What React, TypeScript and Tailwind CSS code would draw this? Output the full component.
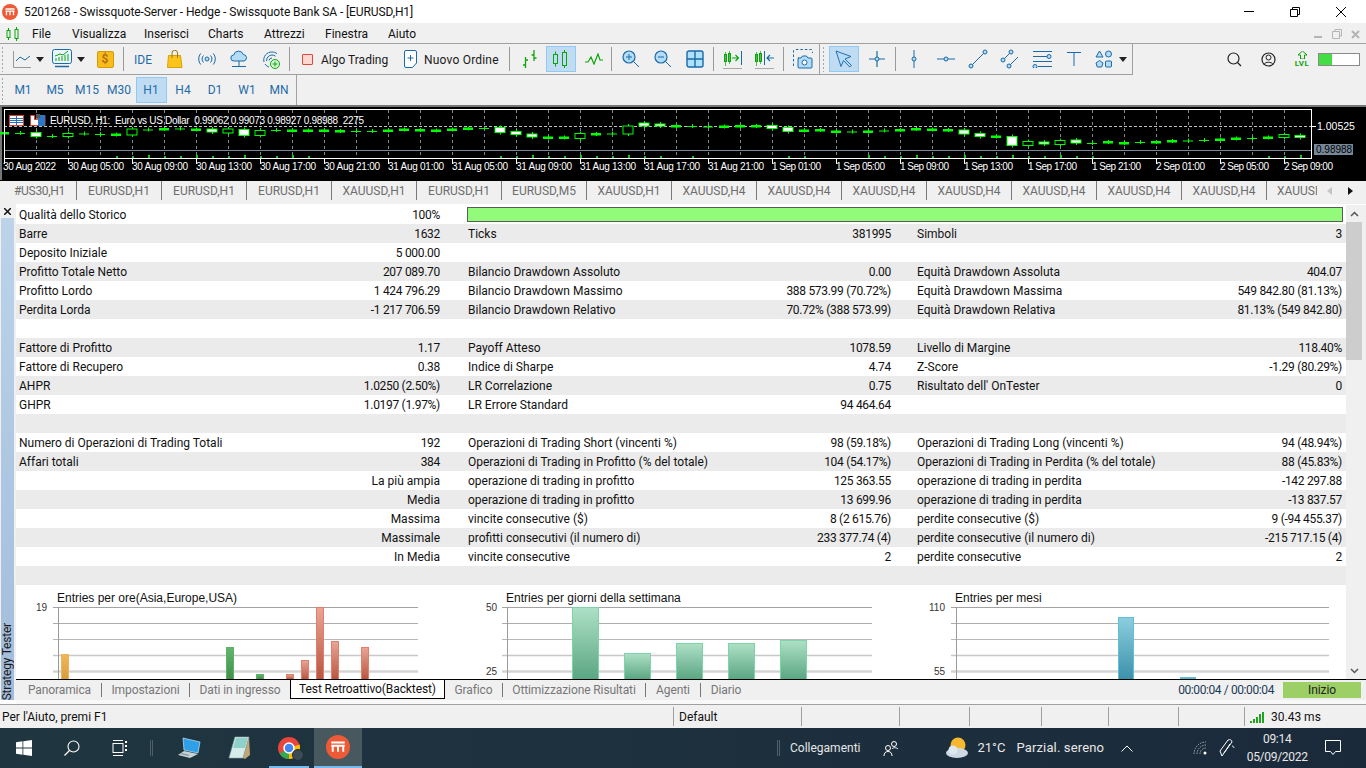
/**
 * MetaTrader 5 — Strategy Tester report view, Windows 10 shell around it.
 */
import { type FC, type ReactNode } from "react";

const BLUE = "#1a6aa8";
const LIGHT = "#b5dcf7";
const GREEN = "#0ba50b";

const Svg: FC<{ w: number; h: number; children: ReactNode }> = ({ w, h, children }) => (
  <svg width={w} height={h} viewBox={`0 0 ${w} ${h}`} fill="none" className="block shrink-0">
    {children}
  </svg>
);

/* ---------- toolbar drawings ---------- */

const MtLogo: FC<{ size: number }> = ({ size }) => (
  <svg width={size} height={size} viewBox="0 0 16 16" className="block shrink-0">
    <circle cx="8" cy="8" r="8" fill="#ee5a36" />
    <path d="M3.500 5h9M3.500 7.200h9M4.500 7.200v4M8 7.200v4M11.500 7.200v4" stroke="#fff" strokeWidth="1.300" />
  </svg>
);

const Arrow = () => (
  <svg width="8" height="5" viewBox="0 0 8 5" className="block shrink-0">
    <path d="M0 0h8L4 5z" fill="#222" />
  </svg>
);

const Sep = () => <div className="w-px h-[24px] bg-[#9a9a9a] shrink-0" />;

const Cell: FC<{ className?: string; children?: ReactNode }> = ({ className = "w-8", children }) => (
  <div className={`${className} h-[26px] flex items-center justify-center shrink-0`}>{children}</div>
);

const Gripper = () => (
  <div className="w-[3px] h-[26px] shrink-0 [background-image:radial-gradient(#a8a8a8_1px,transparent_1px)] [background-size:3px_4px]" />
);

const Handle: FC<{ x: number; y: number }> = ({ x, y }) => (
  <circle cx={x} cy={y} r="2" fill={LIGHT} stroke={BLUE} />
);

const LineChartIcon = () => (
  <Svg w={18} h={18}>
    <path d="M.5 1v16.500H18" stroke="#999" />
    <path d="M3 11l4-4 5 3 5-4" stroke={BLUE} />
  </Svg>
);
const ChartWindowIcon = () => (
  <Svg w={20} h={20}>
    <rect x=".5" y=".5" width="19" height="14" rx="2" fill="#eaf5fd" stroke={BLUE} />
    <path d="M4 12V9M7 12V8M10 12V7M13 12V6M16 12V5" stroke={GREEN} />
    <path d="M3 7l5-2 3 1 5-4" stroke={GREEN} />
    <path d="M3 17.500h14" stroke={BLUE} strokeWidth="1.500" />
  </Svg>
);
const DollarIcon = () => (
  <div className="w-[17px] h-[17px] rounded-[2px] bg-[#f8bd1c] border border-[#d99a00] flex items-center justify-center text-[12px] font-bold leading-none text-[#b3700a]">
    $
  </div>
);
const BagIcon = () => (
  <Svg w={16} h={18}>
    <path d="M1.500 5.500h12l1.500 12H.5z" fill="#fcc419" stroke="#d8a106" />
    <path d="M5 8V3a2.500 2.500 0 015.500 0v5" stroke="#9a7b12" />
  </Svg>
);
const SignalsIcon = () => (
  <Svg w={18} h={14}>
    <circle cx="9" cy="7" r="2" stroke={BLUE} fill={LIGHT} />
    <path d="M5.500 3.500a5 5 0 000 7M12.500 3.500a5 5 0 010 7M2.700 1.500a8.500 8.500 0 000 11M15.300 1.500a8.500 8.500 0 010 11" stroke={BLUE} />
  </Svg>
);
const CloudIcon = () => (
  <Svg w={18} h={18}>
    <path d="M4 11a3 3 0 01-.3-6 5 5 0 019.600-.5A3.300 3.300 0 0114 11z" fill={LIGHT} stroke={BLUE} />
    <path d="M9 11v4M2 16.500h14M9 15v2" stroke={BLUE} />
  </Svg>
);
const WebIcon = () => (
  <Svg w={18} h={19}>
    <path d="M2 12A8 8 0 0110 2c2 0 3.500.6 5 1.700M4.600 11A5.500 5.500 0 0110 5c1.400 0 2.500.4 3.500 1.200M7 10.500A3 3 0 0110 8" stroke={BLUE} />
    <path d="M3 14c1 1.500 2.500 2.500 4 3" stroke={BLUE} />
    <circle cx="13" cy="14" r="4.500" fill="#d7f8d7" stroke={GREEN} />
    <path d="M13 11.500v5M10.500 14h5" stroke={GREEN} />
  </Svg>
);
const NewOrderIcon = () => (
  <Svg w={13} h={18}>
    <path d="M.5 2a1.500 1.500 0 011.500-1.500h9A1.500 1.500 0 0112.500 2v11l-4 4.500H2A1.500 1.500 0 01.5 16z" fill="#fff" stroke={BLUE} />
    <path d="M6.500 5v6M3.500 8h6" stroke={BLUE} />
  </Svg>
);
const BarsIcon = () => (
  <Svg w={18} h={20}>
    <path d="M4.500 8v11M2 16h2.500M4.500 11H7M13 1v11M10.500 6H13M13 9h2.500" stroke={GREEN} strokeWidth="1.300" />
  </Svg>
);
const CandlesIcon = () => (
  <Svg w={18} h={18}>
    <rect x="1.500" y="4.500" width="4" height="9" stroke={GREEN} />
    <rect x="10.500" y="2.500" width="4" height="13" stroke={GREEN} />
    <path d="M3.500 1.500v3M3.500 13.500v3M12.500 0v2.500M12.500 15.500V18" stroke={GREEN} />
  </Svg>
);
const ZigzagIcon = () => (
  <Svg w={18} h={12}>
    <path d="M0 9h3l3-5 3 7 4-10 2 6h3" stroke={GREEN} strokeWidth="1.200" />
  </Svg>
);
const ZoomIcon: FC<{ plus?: boolean }> = ({ plus }) => (
  <Svg w={18} h={18}>
    <circle cx="7" cy="7" r="6" fill={LIGHT} stroke={BLUE} strokeWidth="1.200" />
    <path d={plus ? "M7 4v6M4 7h6" : "M4 7h6"} stroke={BLUE} />
    <path d="M11.500 11.500L17 17" stroke={BLUE} />
  </Svg>
);
const GridIcon = () => (
  <Svg w={18} h={18}>
    <rect x="1" y="1" width="16" height="16" rx="2" fill="#aee0ff" stroke={BLUE} strokeWidth="1.400" />
    <path d="M9 1v16M1 9h16" stroke={BLUE} strokeWidth="1.400" />
  </Svg>
);
const ShiftIcon = () => (
  <Svg w={20} h={20}>
    <rect x="1.500" y="5.500" width="2" height="7" stroke={GREEN} />
    <rect x="5.500" y="4.500" width="2" height="8" stroke={GREEN} />
    <path d="M2.500 3v14M6.500 2v13" stroke={GREEN} strokeWidth=".7" />
    <path d="M9 9h6M12.500 6l3 3-3 3" stroke={GREEN} strokeWidth="1.200" />
    <path d="M18.500 2v14" stroke={BLUE} />
    <path d="M0 19.500h19" stroke="#aaa" />
  </Svg>
);
const ScrollIcon = () => (
  <Svg w={20} h={20}>
    <rect x=".5" y="5.500" width="2" height="7" stroke={GREEN} />
    <rect x="4.500" y="4.500" width="2" height="8" stroke={GREEN} />
    <path d="M1.500 3v14M5.500 2v13" stroke={GREEN} strokeWidth=".7" />
    <path d="M9.500 2v14" stroke={BLUE} />
    <path d="M12 9h7M15 6l-3 3 3 3" stroke={BLUE} strokeWidth="1.200" />
    <path d="M0 19.500h19" stroke="#aaa" />
  </Svg>
);
const ScreenshotIcon = () => (
  <Svg w={20} h={20}>
    <path d="M.5 17V2A1.500 1.500 0 012 .5h16A1.500 1.500 0 0119.500 2v2" stroke={BLUE} strokeDasharray="2.500 2" />
    <path d="M5 9h3l1.500-2h4l1.500 2h3a1 1 0 011 1v8a1 1 0 01-1 1H6a1 1 0 01-1-1v-8a1 1 0 011-1z" fill={LIGHT} stroke={BLUE} />
    <circle cx="11.500" cy="13.500" r="2.500" fill="#fff" stroke={BLUE} />
  </Svg>
);
const CursorIcon = () => (
  <Svg w={18} h={18}>
    <path d="M1 1l15 5.500-6 2.500 6.500 6.500-1.800 1.500L8.500 10.500 6 16.500z" fill={LIGHT} stroke="#2a6da8" strokeLinejoin="round" />
  </Svg>
);
const CrossIcon = () => (
  <Svg w={18} h={18}>
    <path d="M9 1v16M1 9h16" stroke={BLUE} strokeWidth="1.200" />
    <Handle x={9} y={9} />
  </Svg>
);
const VLineIcon = () => (
  <Svg w={6} h={18}>
    <path d="M3 0v18" stroke={BLUE} />
    <Handle x={3} y={9} />
  </Svg>
);
const HLineIcon = () => (
  <Svg w={18} h={6}>
    <path d="M0 3h18" stroke={BLUE} />
    <Handle x={9} y={3} />
  </Svg>
);
const TrendIcon = () => (
  <Svg w={20} h={20}>
    <path d="M3 17L17 3" stroke={BLUE} />
    <Handle x={3} y={17} />
    <Handle x={17} y={3} />
  </Svg>
);
const ChannelIcon = () => (
  <Svg w={20} h={20}>
    <path d="M3 11l8-8M9 17l9-9" stroke={BLUE} />
    <Handle x={3} y={11} />
    <Handle x={11} y={3} />
    <Handle x={9} y={17} />
  </Svg>
);
const FiboIcon = () => (
  <Svg w={20} h={18}>
    <path d="M1 1.500h19M1 6.500h15M1 11.500h19M6 16.500h14" stroke={BLUE} />
    <Handle x={17} y={6.5} />
    <Handle x={3} y={16.5} />
  </Svg>
);
const TextToolIcon = () => (
  <Svg w={14} h={14}>
    <path d="M0 .5h14M7 .5V14" stroke={BLUE} />
  </Svg>
);
const ShapesIcon = () => (
  <Svg w={18} h={18}>
    <path d="M4.500 1l3.500 6H1z" fill={LIGHT} stroke={BLUE} />
    <circle cx="13.500" cy="4" r="3" fill={LIGHT} stroke={BLUE} />
    <path d="M4.500 10.500l3.500 2.500-1.300 4H2.300L1 13z" fill={LIGHT} stroke={BLUE} />
    <rect x="10.500" y="11" width="6" height="6" rx="1" fill={LIGHT} stroke={BLUE} />
  </Svg>
);

/* ---------- title and menu ---------- */

const TitleBar = () => (
  <div className="h-[23px] bg-white flex items-center shrink-0">
    <div className="ml-[2px]">
      <MtLogo size={16} />
    </div>
    <span className="ml-[6px] text-[12px] tracking-[-0.1px] text-[#111]">
      5201268 - Swissquote-Server - Hedge - Swissquote Bank SA - [EURUSD,H1]
    </span>
    <div className="ml-auto flex items-center">
      <div className="w-[46px] flex justify-center">
        <div className="w-[10px] h-px bg-black" />
      </div>
      <div className="w-[46px] flex justify-center">
        <Svg w={10} h={10}>
          <path d="M2.500 2.500V.5h7v7h-2M.5 2.500h7v7h-7z" stroke="#000" />
        </Svg>
      </div>
      <div className="w-[46px] flex justify-center mr-[2px]">
        <Svg w={10} h={10}>
          <path d="M0 0l10 10M10 0L0 10" stroke="#000" />
        </Svg>
      </div>
    </div>
  </div>
);

const MENU: [string, string][] = [
  ["File", "ml-[12px] w-[40px]"],
  ["Visualizza", "w-[72px]"],
  ["Inserisci", "w-[64px]"],
  ["Charts", "w-[56px]"],
  ["Attrezzi", "w-[61px]"],
  ["Finestra", "w-[63px]"],
  ["Aiuto", "w-[40px]"],
];

const MenuBar = () => (
  <div className="h-[20px] bg-[#f0f0f0] flex items-center shrink-0 text-[12px] text-[#111] pt-[2px]">
    <div className="ml-[6px] w-[14px]">
      <Svg w={13} h={14}>
        <rect x="1" y="3.500" width="3" height="7" stroke={GREEN} />
        <rect x="9" y="2.500" width="3" height="9" stroke={GREEN} />
        <path d="M2.500 1v2.500M2.500 10.500V13M10.500 0v2.500M10.500 11.500V14" stroke={GREEN} />
      </Svg>
    </div>
    {MENU.map(([label, cls]) => (
      <span key={label} className={`${cls} shrink-0`}>
        {label}
      </span>
    ))}
    <div className="ml-auto mr-[5px] flex items-center gap-[9px]">
      <Svg w={10} h={10}>
        <path d="M1 8h8" stroke="#b5b5b5" strokeWidth="2" />
      </Svg>
      <Svg w={10} h={10}>
        <path d="M3 2V.5h6.500V7H8M.5 2.500H7.500v7H.5z" stroke="#b5b5b5" />
      </Svg>
      <Svg w={10} h={10}>
        <path d="M1 2l7 7M8 2L1 9" stroke="#b5b5b5" strokeWidth="2" />
      </Svg>
    </div>
  </div>
);

const ToolbarMain = () => (
  <div className="h-[32px] bg-[#f0f0f0] border-t border-[#a0a0a0] flex shrink-0">
    <div className="w-[1133px] h-[31px] border-b border-r border-[#a0a0a0] flex items-center text-[12px] text-[#1a1a1a] shrink-0">
      <div className="ml-[1px] w-[7px]">
        <Gripper />
      </div>
      <Cell className="w-[28px]">
        <LineChartIcon />
      </Cell>
      <Cell className="w-[8px]">
        <Arrow />
      </Cell>
      <Cell className="ml-[4px] w-[28px]">
        <ChartWindowIcon />
      </Cell>
      <Cell className="ml-[1px] w-[8px]">
        <Arrow />
      </Cell>
      <Cell className="ml-[4px] w-[32px]">
        <DollarIcon />
      </Cell>
      <div className="ml-[2px] mr-[3px]">
        <Sep />
      </div>
      <Cell>
        <span className="text-[12px] text-[#1f6ba8] pt-[1px]">IDE</span>
      </Cell>
      <Cell>
        <BagIcon />
      </Cell>
      <Cell>
        <SignalsIcon />
      </Cell>
      <Cell>
        <CloudIcon />
      </Cell>
      <Cell>
        <WebIcon />
      </Cell>
      <div className="ml-[2px]">
        <Sep />
      </div>
      <div className="ml-[12px] w-[11px] h-[11px] rounded-[1px] bg-[#fbd9d2] border border-[#e2483a] shrink-0" />
      <span className="ml-[8px] w-[83px] shrink-0 whitespace-nowrap pt-[1px]">Algo Trading</span>
      <NewOrderIcon />
      <span className="ml-[7px] w-[85px] shrink-0 whitespace-nowrap pt-[1px] tracking-[0.2px]">Nuovo Ordine</span>
      <Sep />
      <Cell className="ml-[5px] w-[30px]">
        <BarsIcon />
      </Cell>
      <Cell className="ml-[1px] w-[30px] bg-[#c0dcf3] border border-[#90c8f6]">
        <CandlesIcon />
      </Cell>
      <Cell className="w-[35px]">
        <ZigzagIcon />
      </Cell>
      <Sep />
      <Cell className="ml-[3px] w-8">
        <ZoomIcon plus />
      </Cell>
      <Cell>
        <ZoomIcon />
      </Cell>
      <Cell>
        <GridIcon />
      </Cell>
      <div className="ml-[2px]">
        <Sep />
      </div>
      <Cell className="ml-[3px] w-8">
        <ShiftIcon />
      </Cell>
      <Cell>
        <ScrollIcon />
      </Cell>
      <div className="ml-[2px]">
        <Sep />
      </div>
      <Cell className="ml-[3px] w-8">
        <ScreenshotIcon />
      </Cell>
      <div className="w-px h-[31px] bg-[#a0a0a0] shrink-0" />
      <div className="ml-[2px]">
        <Gripper />
      </div>
      <Cell className="ml-[4px] w-[30px] bg-[#c0dcf3] border border-[#90c8f6]">
        <CursorIcon />
      </Cell>
      <Cell className="ml-[2px] w-8">
        <CrossIcon />
      </Cell>
      <div className="ml-[2px]">
        <Sep />
      </div>
      <Cell className="ml-[2px] w-8">
        <VLineIcon />
      </Cell>
      <Cell>
        <HLineIcon />
      </Cell>
      <Cell>
        <TrendIcon />
      </Cell>
      <Cell>
        <ChannelIcon />
      </Cell>
      <Cell>
        <FiboIcon />
      </Cell>
      <Cell>
        <TextToolIcon />
      </Cell>
      <Cell className="w-[28px]">
        <ShapesIcon />
      </Cell>
      <Cell className="w-[10px]">
        <Arrow />
      </Cell>
    </div>
    <div className="flex-1 flex items-center h-[31px]">
      <Cell className="ml-[85px] w-[32px]">
        <svg width="15" height="15" viewBox="0 0 15 15" fill="none" className="block">
          <circle cx="6.500" cy="6.500" r="5.500" stroke="#222" strokeWidth="1.200" />
          <path d="M10.500 10.500L14 14" stroke="#222" strokeWidth="1.200" />
        </svg>
      </Cell>
      <Cell className="ml-[2px] w-[32px]">
        <svg width="15" height="15" viewBox="0 0 15 15" fill="none" className="block">
          <circle cx="7.500" cy="7.500" r="6.500" stroke="#222" strokeWidth="1.200" />
          <circle cx="7.500" cy="5.500" r="2.500" stroke="#222" />
          <path d="M3 12.500c1-3 8-3 9 0" stroke="#222" />
        </svg>
      </Cell>
      <div className="ml-[2px] w-[32px] flex flex-col items-center text-[#0ba50b]">
        <svg width="9" height="8" viewBox="0 0 9 8" className="block">
          <path d="M4.500 0L9 4H6.500v4h-4V4H0z" fill="none" stroke="#0ba50b" />
        </svg>
        <span className="text-[8px] leading-[9px] font-bold tracking-[0.5px]">LVL</span>
      </div>
      <div className="w-[42px] h-[13px] border border-[#8a8a8a] bg-white shrink-0">
        <div className="w-[13px] h-full bg-[#44dd44]" />
      </div>
    </div>
  </div>
);

const TIMEFRAMES = ["M1", "M5", "M15", "M30", "H1", "H4", "D1", "W1", "MN"];

const ToolbarTimeframes = () => (
  <div className="h-[30px] bg-[#f0f0f0] flex items-center shrink-0">
    <div className="ml-[1px] w-[6px]">
      <Gripper />
    </div>
    {TIMEFRAMES.map((t) => (
      <div
        key={t}
        className={
          t === "H1"
            ? "w-[31px] mx-[0.5px] h-[26px] flex items-center justify-center text-[12px] text-[#1f6ba8] bg-[#c0dcf3] border border-[#90c8f6]"
            : "w-[32px] h-[26px] flex items-center justify-center text-[12px] text-[#1f6ba8]"
        }
      >
        {t}
      </div>
    ))}
    <div className="ml-[1px] w-px h-[30px] bg-[#a0a0a0]" />
  </div>
);

/* ---------- price chart ---------- */

// kind: t = thin doji, k = thick flat candle, w = white body, h = hollow body
const CANDLES: [number, string, number?][] = [
  [133, "k"], [133, "t"], [134.5, "w", 4], [136, "t"], [135, "h", 3], [133.5, "t"], [134, "t"], [134.5, "k"],
  [132, "h", 6], [129.5, "t"], [129, "k"], [128.5, "t"], [129.5, "k"], [130.5, "w", 3], [131, "h", 4], [132.5, "w", 6],
  [133, "h", 5], [130, "t"], [130.5, "k"], [130.5, "k"], [130.5, "k"], [131, "k"], [131, "t"], [131, "t"],
  [130.5, "k"], [129.5, "k"], [130, "k"], [130.5, "k"], [129.5, "k"], [128.5, "k"], [128, "t"], [130, "w", 5],
  [133, "w", 3], [135.5, "w", 3], [137.5, "k"], [137.5, "k"], [136, "h", 5], [134, "k"], [133.5, "t"], [130, "h", 8],
  [124.5, "w", 3], [125, "w", 2], [126, "k"], [126, "t"], [126.5, "t"], [126.5, "k"], [126, "k"], [126, "k"],
  [127, "w", 3], [129.5, "w", 4], [130.5, "k"], [130, "k"], [131.5, "k"], [131.5, "t"], [131.5, "k"], [130.5, "t"],
  [130, "k"], [129, "k"], [129.5, "k"], [130, "k"], [132, "w", 4], [135, "w", 3], [136.5, "k"], [141, "w", 9],
  [143.5, "h", 4], [143, "w", 2], [142.5, "h", 4], [141.5, "w", 3], [143, "t"], [142, "k"], [143, "k"], [142, "t"],
  [142, "k"], [141, "k"], [140.5, "t"], [140, "t"], [139.5, "k"], [138.5, "k"], [138, "t"], [137.5, "k"],
  [136, "h", 3], [136.5, "w", 2],
];

const TIME_LABELS = [
  "30 Aug 2022", "30 Aug 05:00", "30 Aug 09:00", "30 Aug 13:00", "30 Aug 17:00", "30 Aug 21:00", "31 Aug 01:00",
  "31 Aug 05:00", "31 Aug 09:00", "31 Aug 13:00", "31 Aug 17:00", "31 Aug 21:00", "1 Sep 01:00", "1 Sep 05:00",
  "1 Sep 09:00", "1 Sep 13:00", "1 Sep 17:00", "1 Sep 21:00", "2 Sep 01:00", "2 Sep 05:00", "2 Sep 09:00",
];

const VOLUME_SKIP = new Set([
  0, 1, 2, 3, 4, 5, 6, 20, 21, 22, 23, 24, 25, 26, 27, 28, 29, 30, 42, 44, 45, 46, 47, 48, 51, 52, 53,
  69, 70, 71, 72, 73, 74, 75, 76, 77, 78,
]);

const PriceChart = () => (
  <svg width="1366" height="75" viewBox="0 105 1366 75" className="block shrink-0 font-['Liberation_Sans',sans-serif]">
    <rect x="0" y="105" width="1366" height="75" fill="#000" />
    <path d="M0 105.500h1366" stroke="#777" strokeWidth="3" />
    <path d="M1 105v75" stroke="#777" strokeWidth="2" />
    {Array.from({ length: 40 }, (_, i) => (
      <path key={i} d={`M${36.5 + 32 * i} 110v47`} stroke="#778899" strokeDasharray="3 3" />
    ))}
    <path d="M4 126.500h1307" stroke="#c0c0c0" strokeDasharray="3 2" />
    <path d="M4 150.500h1307" stroke="#778899" />
    {CANDLES.map(([y, kind, h = 0], i) => {
      const x = 4 + 16 * i;
      const body = kind === "t"
        ? <path d={`M${x - 5} ${y + 0.5}h10`} stroke="#00ff00" />
        : kind === "k"
          ? <rect x={x - 5} y={y - 1} width="10" height="2.500" fill="#00ff00" />
          : <rect x={x - 5} y={y - h / 2} width="10" height={h} fill={kind === "w" ? "#fff" : "#000"} stroke="#00ff00" />;
      return (
        <g key={i}>
          <path d={`M${x + 0.5} ${y - h / 2 - 2}v${h + 4}`} stroke="#00ff00" />
          {body}
          {!VOLUME_SKIP.has(i) && <rect x={x} y={i % 3 === 0 ? 155 : 156} width="2" height={i % 3 === 0 ? 3 : 2} fill="#1fc01f" />}
        </g>
      );
    })}
    <rect x="4.500" y="109.500" width="1307" height="49" stroke="#fff" fill="none" />
    {TIME_LABELS.map((t, i) => (
      <g key={t}>
        <path d={`M${4.5 + 64 * i} 158v6`} stroke="#fff" />
        <text x={3 + 64 * i + (i > 0 ? 1 : 0)} y="170" fill="#fff" fontSize="10" textLength={t.length > 11 ? 56 : t.startsWith("30") ? 53 : 49}>
          {t}
        </text>
      </g>
    ))}
    <path d="M1311 126.500h5" stroke="#fff" />
    <text x="1317" y="130" fill="#fff" fontSize="10.500">1.00525</text>
    <rect x="1314" y="144" width="39" height="11" fill="#778899" />
    <text x="1316" y="153" fill="#000" fontSize="10">0.98988</text>
    <g>
      <rect x="9.500" y="115.500" width="14" height="10" fill="#fff" stroke="#d8412f" />
      <path d="M16.500 116v9M10 118.500h13M10 120.500h13M10 122.500h13" stroke="#2a6fbf" />
      <path d="M30.500 115.500h4v4h3v-4h7.500v10h-14.500z" fill="#fff" stroke="#d8412f" />
      <rect x="38" y="115" width="7" height="11" fill="#2a78c8" />
      <rect x="36" y="114" width="4" height="4" fill="#555" />
    </g>
    <text x="50" y="124" fill="#fff" fontSize="10" textLength="314" className="whitespace-pre">
      EURUSD, H1:  Euro vs US Dollar  0.99062 0.99073 0.98927 0.98988  2275
    </text>
  </svg>
);

/* ---------- chart tabs ---------- */

const CHART_TABS = [
  "EURUSD,H1", "EURUSD,H1", "EURUSD,H1", "XAUUSD,H1", "EURUSD,H1", "EURUSD,M5", "XAUUSD,H1",
  "XAUUSD,H4", "XAUUSD,H4", "XAUUSD,H4", "XAUUSD,H4", "XAUUSD,H4", "XAUUSD,H4", "XAUUSD,H4",
];

const ChartTabs = () => (
  <div className="h-[24px] bg-[#f0f0f0] border-t border-black shrink-0 flex items-start">
    <div className="w-[1317px] h-[19px] flex overflow-hidden text-[12px] text-[#6e6e6e]">
      <div className="w-[77px] h-[19px] flex items-center border-r border-[#7a7a7a] shrink-0 pl-[14px]">
        <span className="whitespace-nowrap tracking-[-0.3px]">#US30,H1</span>
      </div>
      {CHART_TABS.map((t, i) => (
        <div key={i} className="w-[85px] h-[19px] flex items-center justify-center border-r border-[#7a7a7a] shrink-0">
          {t}
        </div>
      ))}
      <div className="w-[60px] h-[19px] flex items-center pl-[10px] shrink-0 whitespace-nowrap overflow-hidden">
        <span className="w-[40px] overflow-hidden">XAUUSD,H4</span>
      </div>
    </div>
    <div className="h-[19px] flex items-center ml-[10px] gap-[16px]">
      <svg width="5" height="8" viewBox="0 0 5 8" className="block"><path d="M5 0v8L0 4z" fill="#c4c4c4" /></svg>
      <svg width="5" height="8" viewBox="0 0 5 8" className="block"><path d="M0 0v8l5-4z" fill="#111" /></svg>
    </div>
  </div>
);

/* ---------- report table ---------- */

type Row = [string, string, string, string, string, string];

const ROWS: Row[] = [
  ["Qualità dello Storico", "100%", "", "", "", ""],
  ["Barre", "1632", "Ticks", "381995", "Simboli", "3"],
  ["Deposito Iniziale", "5 000.00", "", "", "", ""],
  ["Profitto Totale Netto", "207 089.70", "Bilancio Drawdown Assoluto", "0.00", "Equità Drawdown Assoluta", "404.07"],
  ["Profitto Lordo", "1 424 796.29", "Bilancio Drawdown Massimo", "388 573.99 (70.72%)", "Equità Drawdown Massima", "549 842.80 (81.13%)"],
  ["Perdita Lorda", "-1 217 706.59", "Bilancio Drawdown Relativo", "70.72% (388 573.99)", "Equità Drawdown Relativa", "81.13% (549 842.80)"],
  ["", "", "", "", "", ""],
  ["Fattore di Profitto", "1.17", "Payoff Atteso", "1078.59", "Livello di Margine", "118.40%"],
  ["Fattore di Recupero", "0.38", "Indice di Sharpe", "4.74", "Z-Score", "-1.29 (80.29%)"],
  ["AHPR", "1.0250 (2.50%)", "LR Correlazione", "0.75", "Risultato dell' OnTester", "0"],
  ["GHPR", "1.0197 (1.97%)", "LR Errore Standard", "94 464.64", "", ""],
  ["", "", "", "", "", ""],
  ["Numero di Operazioni di Trading Totali", "192", "Operazioni di Trading Short (vincenti %)", "98 (59.18%)", "Operazioni di Trading Long (vincenti %)", "94 (48.94%)"],
  ["Affari totali", "384", "Operazioni di Trading in Profitto (% del totale)", "104 (54.17%)", "Operazioni di Trading in Perdita (% del totale)", "88 (45.83%)"],
  ["", "La più ampia", "operazione di trading in profitto", "125 363.55", "operazione di trading in perdita", "-142 297.88"],
  ["", "Media", "operazione di trading in profitto", "13 699.96", "operazione di trading in perdita", "-13 837.57"],
  ["", "Massima", "vincite consecutive ($)", "8 (2 615.76)", "perdite consecutive ($)", "9 (-94 455.37)"],
  ["", "Massimale", "profitti consecutivi (il numero di)", "233 377.74 (4)", "perdite consecutive (il numero di)", "-215 717.15 (4)"],
  ["", "In Media", "vincite consecutive", "2", "perdite consecutive", "2"],
  ["", "", "", "", "", ""],
];

const Value: FC<{ text: string }> = ({ text }) => (
  <span className={/^[-\d]/.test(text) ? "tracking-[-0.3px]" : ""}>{text}</span>
);

const ReportTable = () => (
  <div className="text-[12px] text-[#111]">
    {ROWS.map((r, i) => (
      <div key={i} className={`h-[19px] flex items-center ${i % 2 ? "bg-[#ebebeb]" : "bg-white"}`}>
        <div className="w-[449px] pl-[3px] pr-[25px] flex justify-between whitespace-nowrap shrink-0">
          <span>{r[0]}</span>
          <Value text={r[1]} />
        </div>
        {i === 0 ? (
          <div className="ml-[2px] w-[876px] h-[15px] bg-[#92fb7a] border border-[#5a5a5a]" />
        ) : (
          <>
            <div className="w-[449px] pl-[3px] pr-[23px] flex justify-between whitespace-nowrap shrink-0">
              <span>{r[2]}</span>
              <Value text={r[3]} />
            </div>
            <div className="w-[432px] pl-[3px] pr-[4px] flex justify-between whitespace-nowrap shrink-0">
              <span>{r[4]}</span>
              <Value text={r[5]} />
            </div>
          </>
        )}
      </div>
    ))}
  </div>
);

/* ---------- entry histograms ---------- */

type Bar = { x: number; w: number; top: number; id: string; stroke: string };

const GRID_Y: [number, string, number][] = [
  [22.5, "#a3a3a3", 1],
  [38.5, "#adadad", 1],
  [54.5, "#b8b8b8", 1],
  [70.5, "#c8c8c8", 1.5],
  [86.5, "#d4d4d4", 2.5],
];

const Gradient: FC<{ id: string; from: string; to: string }> = ({ id, from, to }) => (
  <linearGradient id={id} x1="0" y1="0" x2="0" y2="1">
    <stop offset="0" stopColor={from} />
    <stop offset="1" stopColor={to} />
  </linearGradient>
);

const Histogram: FC<{
  width: number;
  title: string;
  axisX: number;
  lineFrom: number;
  lineTo: number;
  labels: [string, string?];
  labelX: number;
  bars: Bar[];
}> = ({ width, title, axisX, lineFrom, lineTo, labels, labelX, bars }) => (
  <svg width={width} height="94" viewBox={`0 0 ${width} 94`} className="block shrink-0 font-['Liberation_Sans',sans-serif]">
    <defs>
      <Gradient id="orange" from="#f2b65a" to="#d99a3a" />
      <Gradient id="green" from="#62b56c" to="#3f8f4a" />
      <Gradient id="red" from="#e9a595" to="#b9553f" />
      <Gradient id="mint" from="#aee0c6" to="#5aa682" />
      <Gradient id="teal" from="#8ccede" to="#3c90aa" />
    </defs>
    <text x="41" y="17" fontSize="12" fill="#111">{title}</text>
    {GRID_Y.map(([y, c, sw]) => (
      <path key={y} d={`M${lineFrom} ${y}H${lineTo}`} stroke={c} strokeWidth={sw} />
    ))}
    <path d={`M${axisX} 22V94`} stroke="#9a9a9a" />
    <text x={labelX} y="26" fontSize="10" fill="#333" textAnchor="end">{labels[0]}</text>
    {labels[1] && <text x={labelX} y="90" fontSize="10" fill="#333" textAnchor="end">{labels[1]}</text>}
    {bars.map((b) => (
      <rect key={b.x} x={b.x + 0.5} y={b.top + 0.5} width={b.w - 1} height={94 - b.top} fill={`url(#${b.id})`} stroke={b.stroke} />
    ))}
  </svg>
);

const HOUR_BARS: Bar[] = [
  { x: 45, w: 8, top: 69, id: "orange", stroke: "#efb35a" },
  { x: 210, w: 8, top: 62, id: "green", stroke: "#5fb068" },
  { x: 240, w: 8, top: 89, id: "green", stroke: "#5fb068" },
  { x: 270, w: 8, top: 89, id: "red", stroke: "#e0806a" },
  { x: 285, w: 8, top: 75, id: "red", stroke: "#e0806a" },
  { x: 300, w: 8, top: 22, id: "red", stroke: "#e0806a" },
  { x: 315, w: 8, top: 56, id: "red", stroke: "#e0806a" },
  { x: 345, w: 8, top: 62, id: "red", stroke: "#e0806a" },
];

const DAY_BARS: Bar[] = [
  { x: 107, w: 27, top: 22, id: "mint", stroke: "#7cd5a8" },
  { x: 159, w: 27, top: 68, id: "mint", stroke: "#7cd5a8" },
  { x: 211, w: 27, top: 58, id: "mint", stroke: "#7cd5a8" },
  { x: 263, w: 27, top: 58, id: "mint", stroke: "#7cd5a8" },
  { x: 315, w: 27, top: 55, id: "mint", stroke: "#7cd5a8" },
];

const MONTH_BARS: Bar[] = [
  { x: 204, w: 16, top: 32, id: "teal", stroke: "#5fc0d8" },
  { x: 266, w: 16, top: 92, id: "teal", stroke: "#5fc0d8" },
];

/* ---------- tester panel ---------- */

const TESTER_TABS_LEFT: [string, string][] = [
  ["Panoramica", "ml-[2px] w-[84px] border-r border-[#777]"],
  ["Impostazioni", "w-[88px] border-r border-[#777]"],
  ["Dati in ingresso", "w-[100px]"],
];
const TESTER_TABS_RIGHT: [string, string][] = [
  ["Grafico", "w-[58px] border-r border-[#777]"],
  ["Ottimizzazione Risultati", "w-[143px] border-r border-[#777]"],
  ["Agenti", "w-[55px] border-r border-[#777]"],
  ["Diario", "w-[50px]"],
];

const TesterTabs = () => (
  <div className="h-[20px] bg-[#f0f0f0] flex items-start text-[12px] tracking-[-0.1px] text-[#777] shrink-0">
    <div className="flex items-center h-[19px]">
      {TESTER_TABS_LEFT.map(([t, cls]) => (
        <div key={t} className={`${cls} h-[14px] flex items-center justify-center whitespace-nowrap shrink-0`}>
          {t}
        </div>
      ))}
    </div>
    <div className="h-[19px] w-[155px] bg-white border-x border-b border-black flex items-center justify-center text-[#111] whitespace-nowrap shrink-0">
      Test Retroattivo(Backtest)
    </div>
    <div className="flex items-center h-[19px]">
      {TESTER_TABS_RIGHT.map(([t, cls]) => (
        <div key={t} className={`${cls} h-[14px] flex items-center justify-center whitespace-nowrap shrink-0`}>
          {t}
        </div>
      ))}
    </div>
    <span className="ml-auto h-[19px] flex items-center text-[#1c3a57] tracking-[-0.4px]">00:00:04 / 00:00:04</span>
    <div className="ml-[9px] mr-[5px] mt-[2px] w-[78px] h-[16px] bg-[#9ccf66] flex items-center justify-center text-[#222]">
      Inizio
    </div>
  </div>
);

const Scrollbar = () => (
  <div className="w-[20px] bg-[#f0f0f0] flex flex-col shrink-0">
    <div className="w-[16px] h-[17px] flex items-center justify-center">
      <svg width="9" height="6" viewBox="0 0 9 6" fill="none" className="block"><path d="M1 5l3.500-3.500L8 5" stroke="#555" strokeWidth="1.500" /></svg>
    </div>
    <div className="w-[16px] h-[138px] bg-[#cdcdcd]" />
    <div className="w-[16px] mt-auto h-[17px] flex items-center justify-center">
      <svg width="9" height="6" viewBox="0 0 9 6" fill="none" className="block"><path d="M1 1l3.500 3.500L8 1" stroke="#555" strokeWidth="1.500" /></svg>
    </div>
  </div>
);

const TesterPanel = () => (
  <div className="h-[500px] bg-white flex shrink-0">
    <div className="w-[16px] h-[496px] bg-[#f0f0f0] flex flex-col items-start pl-[1px] shrink-0">
      <div className="w-[13px] h-[14px] flex items-center justify-center">
        <Svg w={7} h={7}>
          <path d="M0 0l7 7M7 0L0 7" stroke="#111" strokeWidth="1.500" />
        </Svg>
      </div>
      <div className="w-[13px] flex-1 bg-linear-to-b from-[#bcd3ea] to-[#a2bcda] flex items-end justify-center overflow-hidden">
        <span className="[writing-mode:vertical-rl] rotate-180 text-[12px] tracking-[-0.2px] leading-[13px] text-[#1a1a1a] whitespace-nowrap">
          Strategy Tester
        </span>
      </div>
    </div>
    <div className="flex-1 flex flex-col min-w-0">
      <div className="h-px bg-white" />
      <div className="h-[475px] flex border-b border-black overflow-hidden">
        <div className="w-[1330px] shrink-0 overflow-hidden">
          <ReportTable />
          <div className="flex h-[94px]">
            <Histogram width={449} title="Entries per ore(Asia,Europe,USA)" axisX={42.5} lineFrom={37} lineTo={402} labels={["19"]} labelX={31} bars={HOUR_BARS} />
            <Histogram width={449} title="Entries per giorni della settimana" axisX={42.5} lineFrom={37} lineTo={407} labels={["50", "25"]} labelX={32} bars={DAY_BARS} />
            <Histogram width={432} title="Entries per mesi" axisX={42.5} lineFrom={37} lineTo={415} labels={["110", "55"]} labelX={31} bars={MONTH_BARS} />
          </div>
        </div>
        <Scrollbar />
      </div>
      <TesterTabs />
      <div className="h-[4px] bg-[#f8f8f8]" />
    </div>
  </div>
);

/* ---------- status bar ---------- */

const STATUS_CELLS = ["w-[128px]", "w-[98px]", "w-[70px]", "w-[72px]", "w-[67px]", "w-[70px]", "w-[66px]"];

const StatusBar = () => (
  <div className="h-[24px] bg-[#f0f0f0] border-t border-[#a0a0a0] flex items-center text-[12px] text-[#111] shrink-0">
    <span className="w-[673px] pl-[2px] shrink-0">Per l'Aiuto, premi F1</span>
    {STATUS_CELLS.map((w, i) => (
      <div key={w} className={`${w} h-[19px] border-l border-[#a0a0a0] pl-[5px] flex items-center shrink-0`}>
        {i === 0 ? "Default" : ""}
      </div>
    ))}
    <div className="h-[19px] border-l border-[#a0a0a0] pl-[5px] flex items-center gap-[6px] shrink-0">
      <Svg w={15} h={12}>
        <path d="M1 12V10M4 12V8M7 12V6M10 12V3M13 12V1" stroke="#1fa51f" strokeWidth="2" />
      </Svg>
      <span>30.43 ms</span>
    </div>
  </div>
);

/* ---------- windows taskbar ---------- */

const Taskbar = () => (
  <div className="h-[40px] bg-linear-to-r from-[#1f3640] to-[#1b2a3b] flex items-center text-white shrink-0 text-[13px]">
    <div className="w-[48px] h-full flex items-center justify-center">
      <svg width="16" height="16" viewBox="0 0 16 16" className="block">
        <path d="M0 2.200l6.500-.9v6.200H0zM7.300 1.200L16 0v7.500H7.300zM0 8.400h6.500v6.300L0 13.800zM7.300 8.400H16V16l-8.700-1.200z" fill="#fff" />
      </svg>
    </div>
    <div className="w-[48px] h-full flex items-center justify-center">
      <svg width="16" height="16" viewBox="0 0 16 16" fill="none" className="block">
        <circle cx="9.500" cy="6.500" r="5.500" stroke="#fff" strokeWidth="1.100" />
        <path d="M5.500 10.500L.5 15.500" stroke="#fff" strokeWidth="1.300" />
      </svg>
    </div>
    <div className="w-[48px] h-full flex items-center justify-center">
      <svg width="16" height="16" viewBox="0 0 16 16" fill="none" className="block">
        <path d="M1 .5h10M1 15.500h10" stroke="#fff" />
        <rect x="1" y="3.500" width="10" height="9" stroke="#fff" />
        <path d="M14 1v2M14 5v2M14 9v2" stroke="#fff" strokeWidth="2" />
      </svg>
    </div>
    <div className="w-[3px] h-[16px] border-x border-[#4f5f68] ml-[6px]" />
    <div className="ml-[13px] w-[48px] h-full flex items-center justify-center">
      <svg width="24" height="22" viewBox="0 0 24 22" className="block">
        <path d="M5 1l17 4-2 11-14-3z" fill="#2f9fe8" stroke="#bfe6fb" strokeWidth=".7" />
        <path d="M6 14l14 3-8 4L0 18z" fill="#c9d3da" />
        <path d="M4 16l8 2-2 1-8-2z" fill="#8b98a0" />
      </svg>
    </div>
    <div className="w-[50px] h-full flex items-center justify-center">
      <svg width="22" height="24" viewBox="0 0 22 24" className="block">
        <path d="M7 1h14L15 22H1z" fill="#d7ece9" stroke="#8fa7a8" strokeWidth=".6" />
        <path d="M8 2h12L17 12H5z" fill="#8fd0cb" />
        <path d="M15 22l6-21 1 18-5 4z" fill="#bfa67a" />
      </svg>
    </div>
    <div className="w-[50px] h-full relative flex items-center justify-center">
      <svg width="22" height="22" viewBox="0 0 22 22" className="block">
        <circle cx="11" cy="11" r="11" fill="#e8453c" />
        <path d="M11 11L1.500 16.500A11 11 0 0011 22z" fill="#34a853" />
        <path d="M11 11v11A11 11 0 0021.500 7.500z" fill="#fbbc05" />
        <circle cx="11" cy="11" r="5" fill="#4285f4" stroke="#fff" strokeWidth="1.500" />
      </svg>
      <div className="absolute left-[28px] top-[21px] w-[12px] h-[12px] rounded-full bg-[#3b4a55] border border-[#1f2f3a]" />
      <div className="absolute left-[5px] right-[5px] bottom-0 h-[2px] bg-[#76b9ed]" />
    </div>
    <div className="w-[48px] h-full bg-[#47595f] border-b-2 border-[#76b9ed] flex items-center justify-center">
      <MtLogo size={24} />
    </div>
    <div className="ml-[415px] w-[3px] h-[16px] border-x border-[#4f5f68]" />
    <span className="ml-[10px] text-[12px] text-[#e6e6e6] whitespace-nowrap">Collegamenti</span>
    <div className="ml-[23px]">
      <svg width="16" height="16" viewBox="0 0 16 16" fill="none" className="block">
        <circle cx="5" cy="8" r="2.500" stroke="#fff" />
        <circle cx="11" cy="4" r="2.500" stroke="#fff" />
        <path d="M1 16c0-3 1.500-4.500 4-4.500S9 13 9 16M9 9c1-1.500 4-2 6 0" stroke="#fff" />
      </svg>
    </div>
    <div className="ml-[47px]">
      <svg width="23" height="22" viewBox="0 0 23 22" className="block">
        <circle cx="12" cy="8" r="7.500" fill="#f5b82e" />
        <ellipse cx="11" cy="16" rx="11" ry="5" fill="#cfd9e4" />
        <circle cx="7" cy="13" r="4.500" fill="#dfe7ef" />
      </svg>
    </div>
    <span className="ml-[8px] text-[#e8e8e8]">21°C</span>
    <span className="ml-[11px] tracking-[0.15px] text-[#e8e8e8] whitespace-nowrap">Parzial. sereno</span>
    <div className="ml-[17px]">
      <svg width="12" height="7" viewBox="0 0 12 7" fill="none" className="block">
        <path d="M.5 6.500L6 1l5.500 5.500" stroke="#fff" />
      </svg>
    </div>
    <div className="ml-[60px]">
      <svg width="14" height="14" viewBox="0 0 14 14" fill="none" className="block">
        <path d="M1 13A12 12 0 0113 1M4 13a9 9 0 019-9M7 13a6 6 0 016-6" stroke="#9fa9ae" strokeDasharray="1.500 1" />
        <circle cx="12" cy="12" r="1.500" fill="#fff" />
      </svg>
    </div>
    <div className="ml-[12px]">
      <svg width="16" height="18" viewBox="0 0 16 18" fill="none" className="block">
        <path d="M3 17L1 12l8-11c2-1 4 0 4 2l-8 11z M5 14L11 5" stroke="#fff" />
        <path d="M13 7c1 0 2 1 2 2" stroke="#fff" />
      </svg>
    </div>
    <div className="ml-[8px] w-[68px] flex flex-col items-center text-[12px] tracking-[-0.3px] leading-[18px] text-[#e8e8e8]">
      <span>09:14</span>
      <span>05/09/2022</span>
    </div>
    <div className="ml-[14px]">
      <svg width="16" height="16" viewBox="0 0 16 16" fill="none" className="block">
        <path d="M.5.5h15v11h-5l-2.500 3-2.500-3h-5z" stroke="#fff" />
      </svg>
    </div>
  </div>
);

export default function App() {
  return (
    <div className="w-[1366px] h-[768px] overflow-hidden flex flex-col bg-[#f0f0f0] font-['Roboto',sans-serif]">
      <TitleBar />
      <MenuBar />
      <ToolbarMain />
      <ToolbarTimeframes />
      <PriceChart />
      <ChartTabs />
      <TesterPanel />
      <StatusBar />
      <Taskbar />
    </div>
  );
}
